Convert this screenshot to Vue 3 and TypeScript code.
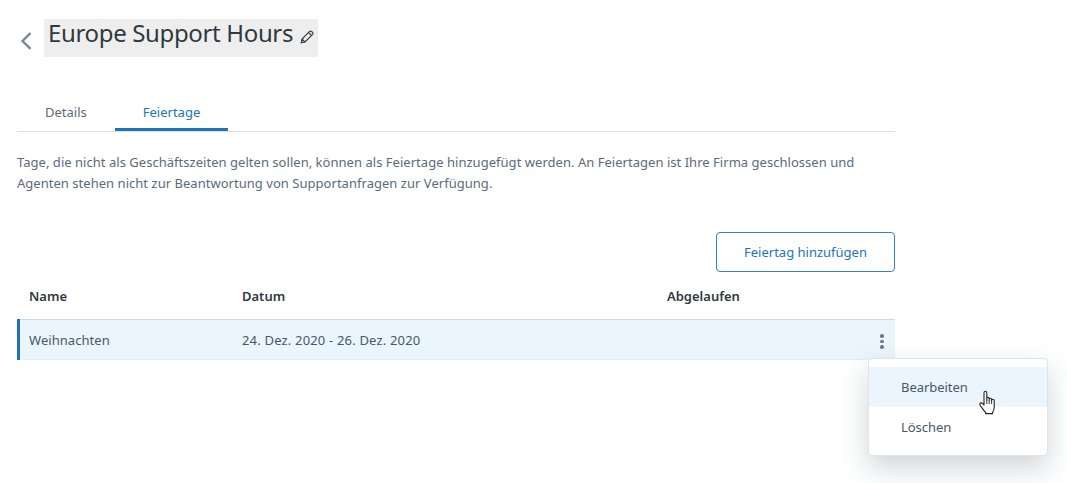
<script setup lang="ts">
import { ref } from 'vue';

interface Holiday {
  name: string;
  date: string;
}

const tabs = ['Details', 'Feiertage'];
const activeTab = ref('Feiertage');
const holidays: Holiday[] = [{ name: 'Weihnachten', date: '24. Dez. 2020 - 26. Dez. 2020' }];
</script>

<template>
  <div class="page">
    <header class="head">
      <svg class="back" width="12" height="18" viewBox="0 0 12 18">
        <path d="M10.5 1.2 L2.5 9 L10.5 16.8" fill="none" stroke="#7b8794" stroke-width="2.4" />
      </svg>
      <div class="title-box">
        <h1>Europe Support Hours</h1>
        <svg class="pencil" width="14" height="14" viewBox="0 0 14 14">
          <path d="M1.2 12.8 L2 9 L9.6 1.4 Q10.6 0.7 11.5 1.4 L12.6 2.5 Q13.3 3.4 12.6 4.3 L5 11.9 Z M8.6 2.6 L11.4 5.4 M2 9 L5 11.9" fill="none" stroke="#2f3941" stroke-width="1.15" />
        </svg>
      </div>
    </header>

    <nav class="tabs">
      <a v-for="tab in tabs" :key="tab" class="tab" :class="{ active: tab === activeTab }">{{ tab }}</a>
    </nav>

    <p class="desc">
      Tage, die nicht als Geschäftszeiten gelten sollen, können als Feiertage hinzugefügt werden. An Feiertagen ist Ihre Firma geschlossen und<br />
      Agenten stehen nicht zur Beantwortung von Supportanfragen zur Verfügung.
    </p>

    <div class="actions">
      <button class="add">Feiertag hinzufügen</button>
    </div>

    <div class="table">
      <div class="row header">
        <div class="c-name">Name</div>
        <div class="c-date">Datum</div>
        <div class="c-exp">Abgelaufen</div>
      </div>
      <div v-for="h in holidays" :key="h.name" class="row item">
        <div class="c-name">{{ h.name }}</div>
        <div class="c-date">{{ h.date }}</div>
        <div class="c-exp"></div>
        <div class="dots"><i></i><i></i><i></i></div>

        <div class="menu">
          <div class="menu-item hover">Bearbeiten</div>
          <div class="menu-item">Löschen</div>
          <svg class="hand" width="18" height="25" viewBox="0 0 18 25">
            <path d="M5 15 V3 Q5 1.2 6.4 1.2 Q7.8 1.2 7.8 3 V10 V8.6 Q7.8 7.4 9 7.4 Q10.2 7.4 10.2 8.6 V10.6 V9.4 Q10.2 8.2 11.4 8.2 Q12.6 8.2 12.6 9.4 V11 V10.2 Q12.6 9.2 13.8 9.2 Q15.2 9.2 15.2 10.6 V17 Q15.2 20 13.6 22.2 V23.6 H6.6 V22.4 Q4.6 20.4 2.6 17.4 L1 15 Q0.4 13.6 1.6 13 Q2.8 12.6 3.6 13.6 Z" fill="#fff" stroke="#222" stroke-width="1.1" stroke-linejoin="round" />
            <path d="M7.8 10 V14 M10.2 10.6 V14 M12.6 11 V14" fill="none" stroke="#222" stroke-width="0.9" />
          </svg>
        </div>
      </div>
    </div>
  </div>
</template>

<style>
html,
body {
  background: #fff;
  overflow: hidden;
}
</style>

<style scoped>
.page {
  width: 878px;
  height: 483px;
  padding: 19px 0 0 17px;
  font-family: "Noto Sans", "Open Sans", sans-serif;
  font-size: 13px;
  color: #475867;
}

.head {
  display: flex;
  align-items: flex-start;
  height: 38px;
}

.back {
  margin: 13px 0 0 3px;
}

.title-box {
  display: flex;
  align-items: center;
  height: 38px;
  width: 274px;
  margin-left: 12px;
  padding-left: 4px;
  box-sizing: border-box;
  background: #eeeeee;
}

.title-box h1 {
  margin: -10px 0 0;
  font-size: 24px;
  font-weight: 400;
  line-height: 30px;
  letter-spacing: -0.35px;
  white-space: nowrap;
  color: #2f3941;
}

.pencil {
  margin: -3px 0 0 7px;
}

.tabs {
  display: flex;
  height: 35px;
  margin-top: 39px;
  border-bottom: 1px solid #dadfe3;
}

.tab {
  box-sizing: border-box;
  height: 35px;
  line-height: 32px;
  color: #5b6b79;
}

.tab:first-child {
  width: 98px;
  padding-left: 28px;
}

.tab.active {
  width: 113px;
  text-align: center;
  color: #2274b9;
  border-bottom: 3px solid #1f73b7;
}

.desc {
  margin: 20px 0 0;
  line-height: 21px;
  white-space: nowrap;
  letter-spacing: 0.03px;
  color: #5b6b79;
}

.actions {
  display: flex;
  justify-content: flex-end;
  margin-top: 38px;
}

.add {
  width: 179px;
  height: 40px;
  border: 1px solid #2f86c6;
  border-radius: 4px;
  background: #fff;
  font: inherit;
  color: #2274b9;
}

.table {
  margin-top: 4px;
}

.row {
  display: flex;
  align-items: center;
  box-sizing: border-box;
}

.header {
  height: 43px;
  padding-bottom: 4px;
  font-weight: 600;
  color: #2f3941;
}

.c-name {
  width: 213px;
  margin-left: 12px;
}

.c-date {
  width: 425px;
}

.item {
  position: relative;
  height: 41px;
  background: #ebf5fd;
  border-top: 1px solid #cfd7df;
  border-bottom: 1px solid #e6edf2;
  color: #475867;
}

.item::before {
  content: "";
  align-self: stretch;
  width: 3px;
  margin: -1px 0;
  background: #1f73b7;
}

.item .c-name {
  width: 213px;
  margin-left: 9px;
  letter-spacing: 0.05px;
}

.item .c-date {
  letter-spacing: 0.18px;
}

.dots {
  position: absolute;
  left: 863px;
  top: 14px;
  display: flex;
  flex-direction: column;
  gap: 2px;
}

.dots i {
  width: 3.5px;
  height: 3.5px;
  border-radius: 50%;
  background: #6b7a87;
}

.menu {
  position: absolute;
  left: 851px;
  top: 38px;
  width: 180px;
  box-sizing: border-box;
  height: 98px;
  padding-top: 8px;
  background: #fff;
  border: 1px solid #dfe4e8;
  border-radius: 4px;
  box-shadow: 0 12px 28px rgba(40, 60, 75, 0.22);
}

.menu-item {
  height: 40px;
  line-height: 40px;
  padding-left: 32px;
  color: #475867;
  letter-spacing: -0.05px;
}

.menu-item.hover {
  background: #ebf5fd;
}

.hand {
  position: absolute;
  left: 110px;
  top: 31px;
}
</style>
